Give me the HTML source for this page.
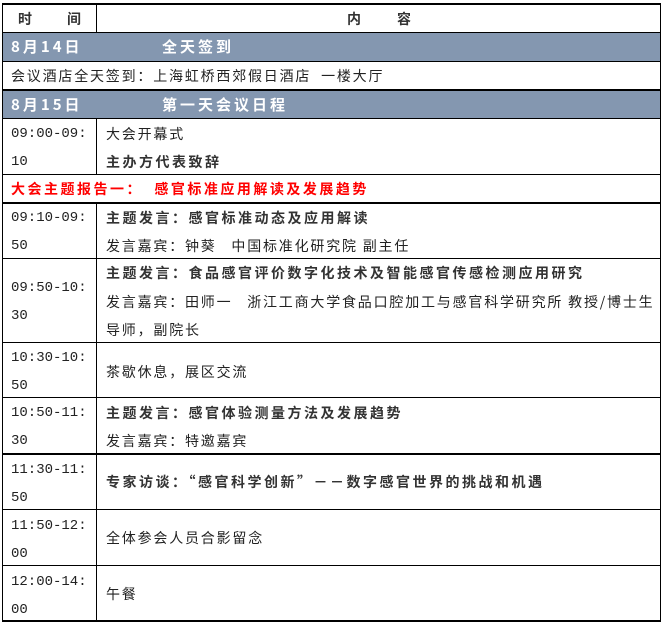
<!DOCTYPE html>
<html><head><meta charset="utf-8"><style>
*{margin:0;padding:0;box-sizing:border-box}
body{width:663px;height:623px;background:#fff;position:relative;overflow:hidden;font-family:"Noto Sans CJK SC","Liberation Sans",sans-serif;font-size:14px;color:#222}
.h{position:absolute;left:2px;width:659px;background:#000}
.v{position:absolute;width:1px;background:#000}
.t{position:absolute;white-space:nowrap;line-height:16px;letter-spacing:1.8px}
.m{font-family:"Liberation Mono","Noto Sans CJK SC",monospace;font-size:14px;letter-spacing:0}
.b{font-weight:bold;color:#333;letter-spacing:2.5px}
.bar{position:absolute;left:3px;width:657px;background:#8497b0}
.w{color:#fff;font-weight:bold;font-size:15px;letter-spacing:3px}
.r{color:#f00;font-weight:bold;letter-spacing:2.5px}
</style></head><body>
<div class="bar" style="top:33px;height:28px"></div>
<div class="bar" style="top:91px;height:27px"></div>
<div class="h" style="top:3px;height:2px"></div>
<div class="h" style="top:32px;height:1px"></div>
<div class="h" style="top:61px;height:1px"></div>
<div class="h" style="top:89px;height:2px"></div>
<div class="h" style="top:118px;height:1px"></div>
<div class="h" style="top:174px;height:1px"></div>
<div class="h" style="top:202px;height:2px"></div>
<div class="h" style="top:258px;height:1px"></div>
<div class="h" style="top:342px;height:1px"></div>
<div class="h" style="top:397px;height:1px"></div>
<div class="h" style="top:453px;height:2px"></div>
<div class="h" style="top:509px;height:1px"></div>
<div class="h" style="top:565px;height:1px"></div>
<div class="h" style="top:620px;height:2px"></div>
<div class="v" style="left:2px;top:3px;height:619px"></div>
<div class="v" style="left:660px;top:3px;height:619px"></div>
<div class="v" style="left:96px;top:3px;height:29px"></div>
<div class="v" style="left:96px;top:118px;height:56px"></div>
<div class="v" style="left:96px;top:202px;height:420px"></div>

<div class="t b" style="left:18px;top:11px">时</div>
<div class="t b" style="left:67px;top:11px">间</div>
<div class="t b" style="left:347px;top:11px">内</div>
<div class="t b" style="left:397px;top:11px">容</div>

<div class="t w" style="left:11px;top:39px">8月14日</div>
<div class="t w" style="left:162px;top:39px">全天签到</div>
<div class="t" style="left:11px;top:68px">会议酒店全天签到：上海虹桥西郊假日酒店 &nbsp;一楼大厅</div>
<div class="t w" style="left:11px;top:97px">8月15日</div>
<div class="t w" style="left:162px;top:97px">第一天会议日程</div>

<div class="t m" style="left:11px;top:126px">09:00-09:</div>
<div class="t m" style="left:11px;top:154px">10</div>
<div class="t" style="left:106px;top:126px">大会开幕式</div>
<div class="t b" style="left:106px;top:154px">主办方代表致辞</div>

<div class="t r" style="left:11px;top:181px">大会主题报告一： &nbsp;感官标准应用解读及发展趋势</div>

<div class="t m" style="left:11px;top:210px">09:10-09:</div>
<div class="t m" style="left:11px;top:238px">50</div>
<div class="t b" style="left:106px;top:210px">主题发言：感官标准动态及应用解读</div>
<div class="t" style="left:106px;top:238px">发言嘉宾：钟葵 &nbsp;&nbsp;中国标准化研究院 副主任</div>

<div class="t m" style="left:11px;top:280px">09:50-10:</div>
<div class="t m" style="left:11px;top:308px">30</div>
<div class="t b" style="left:106px;top:265px">主题发言：食品感官评价数字化技术及智能感官传感检测应用研究</div>
<div class="t" style="left:106px;top:294px">发言嘉宾：田师一 &nbsp;&nbsp;浙江工商大学食品口腔加工与感官科学研究所 教授/博士生</div>
<div class="t" style="left:106px;top:322px">导师，副院长</div>

<div class="t m" style="left:11px;top:350px">10:30-10:</div>
<div class="t m" style="left:11px;top:378px">50</div>
<div class="t" style="left:106px;top:364px">茶歇休息，展区交流</div>

<div class="t m" style="left:11px;top:405px">10:50-11:</div>
<div class="t m" style="left:11px;top:433px">30</div>
<div class="t b" style="left:106px;top:405px">主题发言：感官体验测量方法及发展趋势</div>
<div class="t" style="left:106px;top:433px">发言嘉宾：特邀嘉宾</div>

<div class="t m" style="left:11px;top:462px">11:30-11:</div>
<div class="t m" style="left:11px;top:490px">50</div>
<div class="t b" style="left:106px;top:474px">专家访谈：“感官科学创新”－－数字感官世界的挑战和机遇</div>

<div class="t m" style="left:11px;top:518px">11:50-12:</div>
<div class="t m" style="left:11px;top:546px">00</div>
<div class="t" style="left:106px;top:530px">全体参会人员合影留念</div>

<div class="t m" style="left:11px;top:574px">12:00-14:</div>
<div class="t m" style="left:11px;top:602px">00</div>
<div class="t" style="left:106px;top:586px">午餐</div>
</body></html>
